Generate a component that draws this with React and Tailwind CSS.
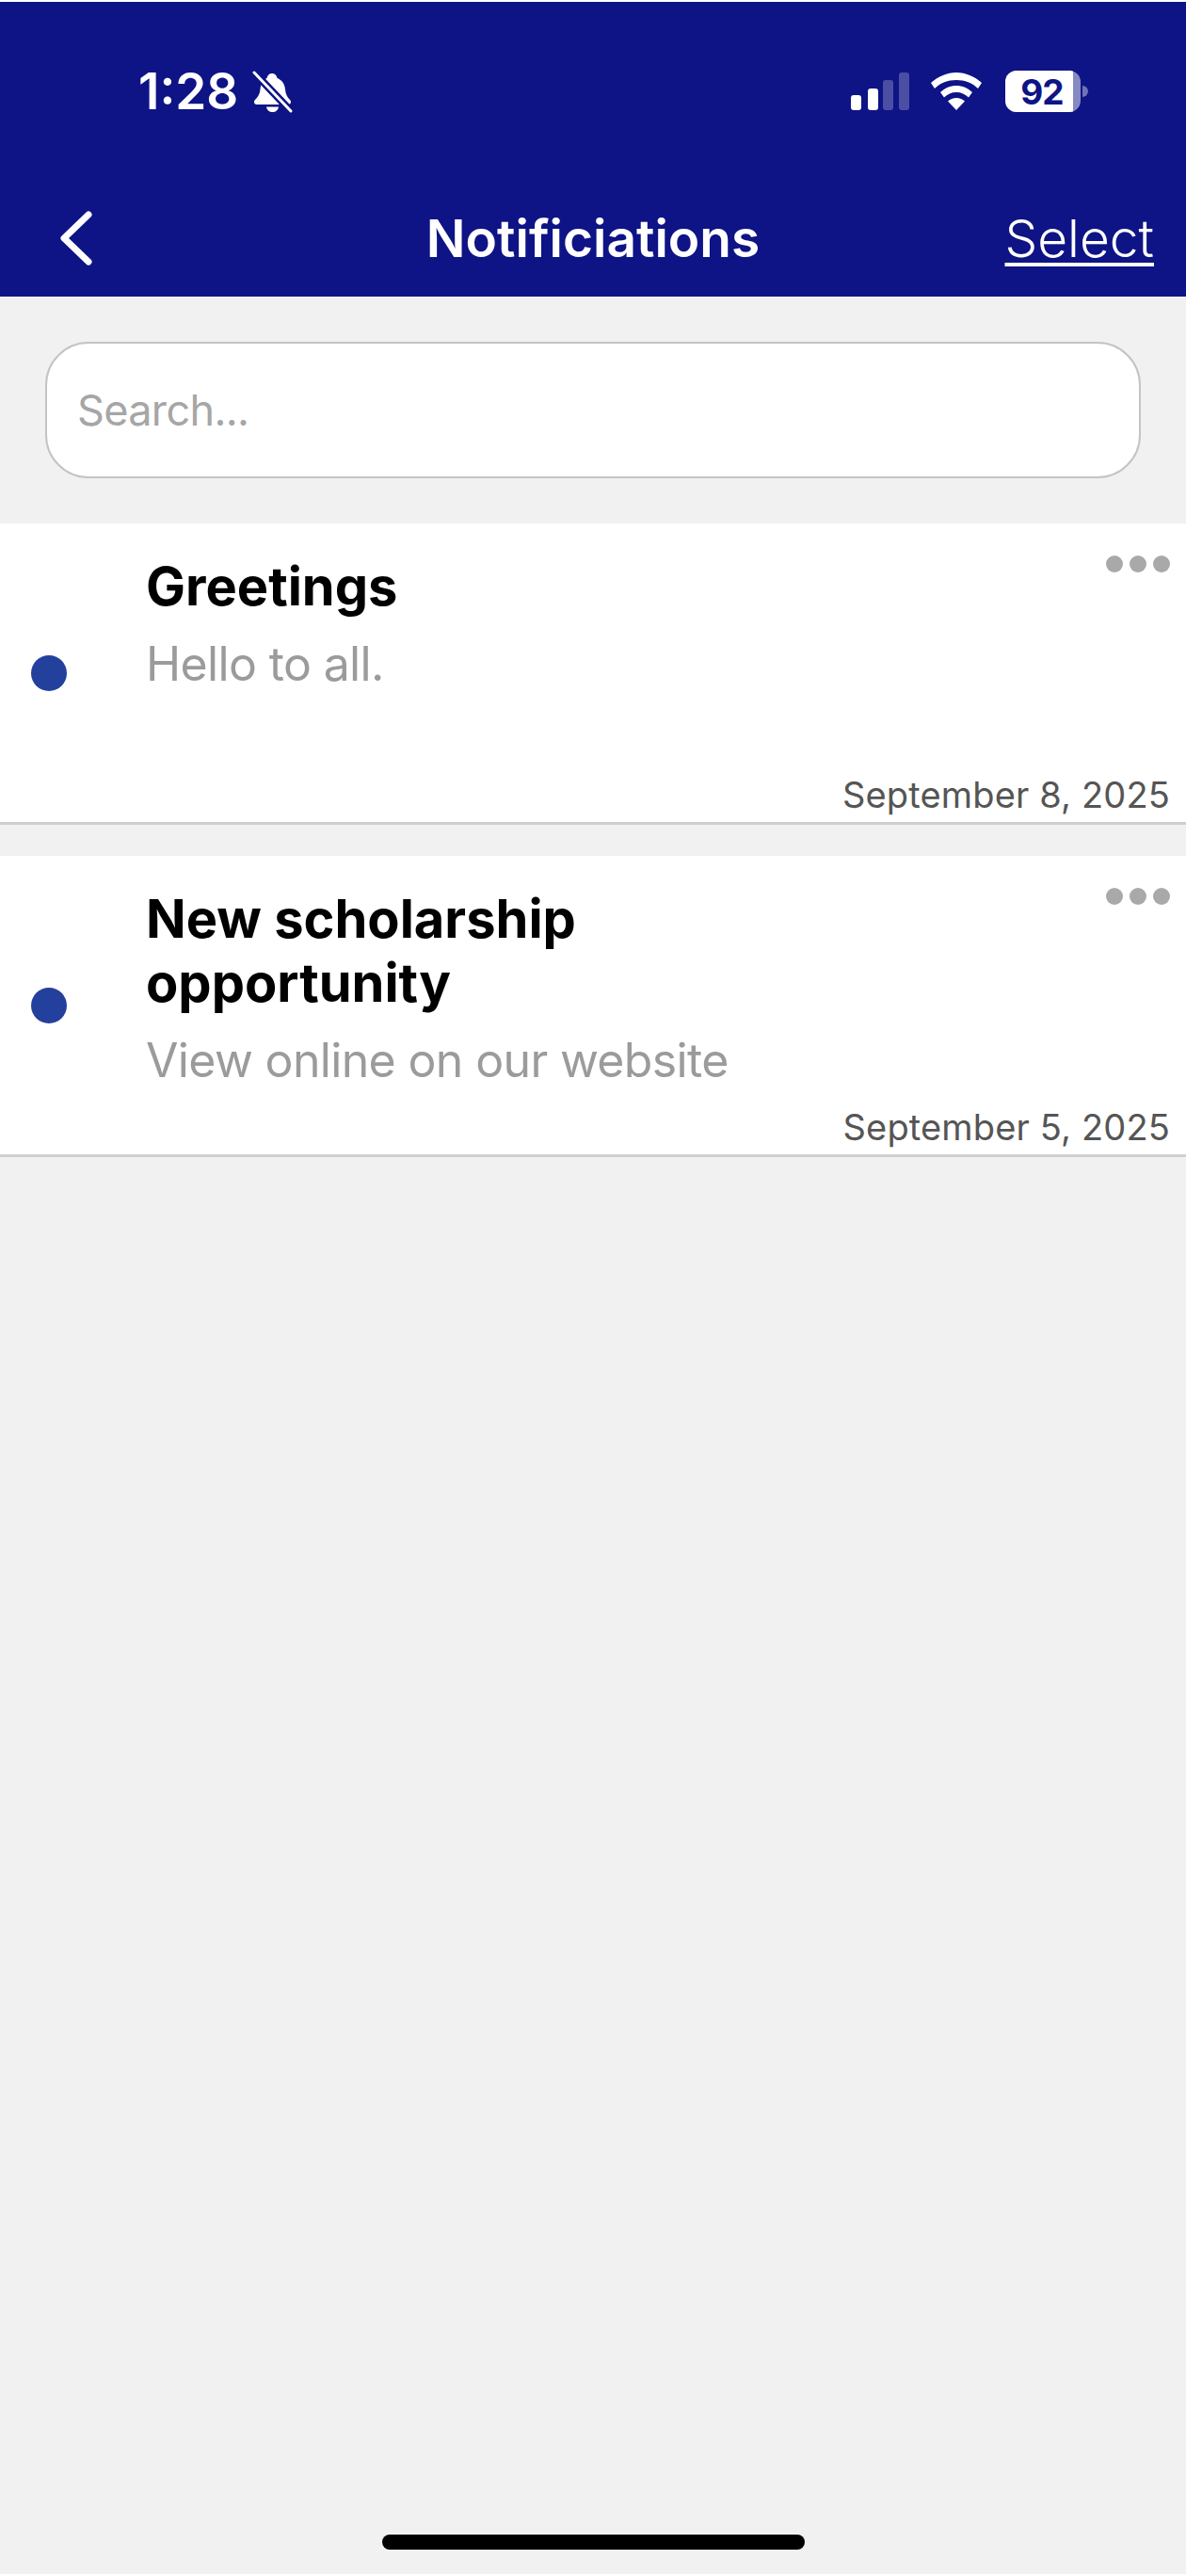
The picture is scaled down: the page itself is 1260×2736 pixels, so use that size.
import React from 'react'

function BellOff() {
  return (
    <svg width="43" height="45" viewBox="0 0 43 45" className="shrink-0">
      <path d="M21 3c3 0 5 2 5.500 5 5 2 8 6 8.500 12 .5 5 2 8 5 11 2 2 1 5-2 5H5c-3 0-4-3-2-5 3-3 5-6 5.500-11 .5-6 3-10 7-12C16 5 18 3 21 3z" fill="white" />
      <path d="M15 38.500h13c-.5 3.500-3 5.500-6.500 5.500S15.500 42 15 38.500z" fill="white" />
      <path d="M3 3l38 40" stroke="#0e1485" strokeWidth="8" />
      <path d="M2 2l39 41" stroke="white" strokeWidth="3" strokeLinecap="round" />
    </svg>
  )
}

function Signal() {
  return (
    <svg width="62" height="40" viewBox="0 0 62 40" className="shrink-0">
      <rect x="0" y="24" width="11" height="16" rx="3" fill="white" />
      <rect x="18" y="17" width="11" height="23" rx="3" fill="white" />
      <rect x="34" y="8" width="11" height="32" rx="3" fill="white" fillOpacity="0.25" />
      <rect x="51" y="0" width="11" height="40" rx="3" fill="white" fillOpacity="0.25" />
    </svg>
  )
}

function Wifi() {
  return (
    <svg width="54" height="40" viewBox="0 0 54 40" className="shrink-0">
      <path d="M27 0c10 0 19 4 27 11l-4 6c-6-6-14-9-23-9S10 11 4 17l-4-6C8 4 17 0 27 0z" fill="white" />
      <path d="M27 14c6.500 0 12 2.500 17 7l-4 5.500c-3.500-3.500-8-5.500-13-5.500s-9.500 2-13 5.500L10 21c5-4.500 10.500-7 17-7z" fill="white" />
      <path d="M27 27c3.500 0 6.500 1.200 9 3.500L27 40l-9-9.500c2.500-2.300 5.500-3.500 9-3.500z" fill="white" />
    </svg>
  )
}

function Battery() {
  return (
    <div className="flex items-center gap-[2px] shrink-0">
      <div className="w-[80px] h-[44px] rounded-[12px] bg-white/50 overflow-hidden">
        <div className="w-[72px] h-full bg-white flex items-center justify-center text-[#0e1485] text-[37px] tracking-[-1px] font-bold leading-none pl-[6px]">
          92
        </div>
      </div>
      <div className="w-[6px] h-[12px] rounded-r-full bg-white/40" />
    </div>
  )
}

function Notification({ title, body, date }) {
  return (
    <div className="bg-white h-[320px] flex border-b-[3px] border-[#cfcfcf]">
      <div className="w-[155px] shrink-0 flex items-center pl-[33px]">
        <div className="w-[38px] h-[38px] rounded-full bg-[#23409c]" />
      </div>
      <div className="flex-1 pt-[33px]">
        <div className="w-[560px] text-[56px] leading-[68px] font-bold text-black">{title}</div>
        <div className="mt-[18px] text-[50px] leading-[60px] tracking-[-0.65px] text-[#9b9b9b]">{body}</div>
      </div>
      <div className="flex flex-col justify-between items-end pt-[34px] pr-[17px] pb-[6px]">
        <div className="flex gap-[7px]">
          <div className="w-[18px] h-[18px] rounded-full bg-[#a9a9a9]" />
          <div className="w-[18px] h-[18px] rounded-full bg-[#a9a9a9]" />
          <div className="w-[18px] h-[18px] rounded-full bg-[#a9a9a9]" />
        </div>
        <div className="text-[38px] leading-[46px] tracking-[0.15px] text-[#555555] whitespace-nowrap">{date}</div>
      </div>
    </div>
  )
}

export default function App() {
  return (
    <div className="h-[2736px] bg-white flex flex-col font-['Inter',sans-serif]">
      <header className="mt-[2px] h-[313px] bg-[#0e1485] text-white shrink-0">
        <div className="pt-[72px] pl-[147px] pr-[104px] flex items-center justify-between h-[118px]">
          <div className="flex items-center gap-[15px]">
            <span className="text-[53px] leading-none font-semibold">1:28</span>
            <BellOff />
          </div>
          <div className="flex items-center">
            <Signal />
            <div className="ml-[23px] mr-[25px]"><Wifi /></div>
            <Battery />
          </div>
        </div>
        <div className="mt-[100px] px-[34px] grid grid-cols-[1fr_auto_1fr] items-center">
          <svg width="34" height="58" viewBox="0 0 34 58" fill="none" className="ml-[30px]">
            <path d="M30 4L4 29l26 25" stroke="white" strokeWidth="7" strokeLinecap="round" strokeLinejoin="round" />
          </svg>
          <div className="text-[55px] leading-[66px] font-semibold">Notificiations</div>
          <div className="justify-self-end text-[55px] leading-[66px] font-light underline decoration-[4px] underline-offset-[6px]">Select</div>
        </div>
      </header>

      <main className="flex-1 mb-[2px] bg-[#f1f1f1] flex flex-col">
        <div className="px-[48px] pt-[48px] pb-[48px]">
          <div className="h-[145px] rounded-[46px] border-2 border-[#c4c4c4] bg-white flex items-center pl-[32px] text-[45px] tracking-[-0.65px] text-[#a6a6a6]">
            Search...
          </div>
        </div>
        <Notification
          title="Greetings"
          body="Hello to all."
          date="September 8, 2025"
        />
        <div className="h-[33px]" />
        <Notification
          title="New scholarship opportunity"
          body="View online on our website"
          date="September 5, 2025"
        />
        <div className="mt-auto mb-[26px] self-center w-[449px] h-[16px] rounded-full bg-black" />
      </main>
    </div>
  )
}
